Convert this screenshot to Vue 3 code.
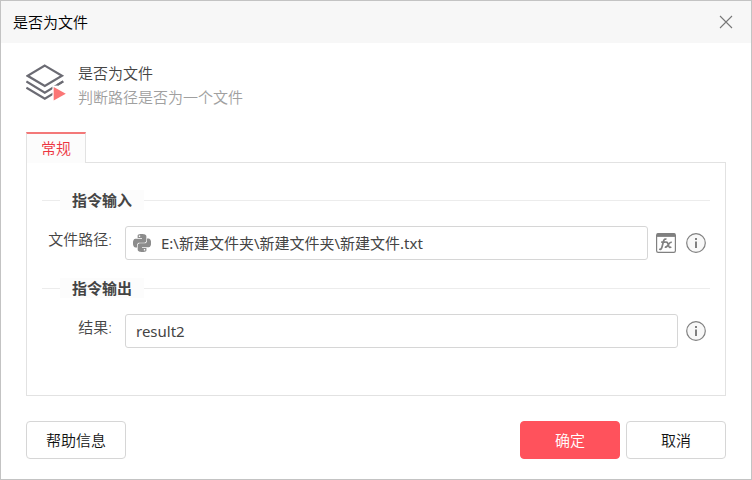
<template>
  <form class="dialog" @submit.prevent>
    <header class="title-bar">
      <h1 class="title">是否为文件</h1>
      <button class="close" type="button" aria-label="关闭">
        <svg width="14" height="14" viewBox="0 0 14 14">
          <path d="M1 1 13 13M13 1 1 13" stroke="#777" stroke-width="1.1" fill="none" />
        </svg>
      </button>
    </header>

    <main class="body">
      <section class="intro">
        <svg class="intro-icon" width="40" height="44" viewBox="0 0 40 44">
          <g fill="none" stroke="#6b6b73" stroke-width="2.2">
            <path d="M18.8 2.6 36 12.8 18.8 23 1.6 12.8Z" />
            <path d="M.4 18.4 18.8 29.6 37.2 18.4" />
            <path d="M.4 24.6 18.8 35.8 37.2 24.6" />
          </g>
          <path d="M26.4 22.6H40V40H26.4Z" fill="#fff" />
          <path d="M31.5 21.9 37.2 18.4" fill="none" stroke="#6b6b73" stroke-width="2.2" />
          <path d="M27.7 24 39.8 30.8 27.7 37.6Z" fill="#fb7676" />
        </svg>
        <div>
          <div class="intro-name">是否为文件</div>
          <div class="intro-desc">判断路径是否为一个文件</div>
        </div>
      </section>

      <div class="tabs" role="tablist">
        <button class="tab" type="button" role="tab" aria-selected="true">常规</button>
      </div>

      <div class="panel" role="tabpanel">
        <section v-for="group in groups" :key="group.key" class="group">
          <div class="legend"><span class="legend-text">{{ group.title }}</span></div>
          <div class="field">
            <label class="label" :for="group.key">{{ group.label }}:</label>
            <div class="box">
              <svg v-if="group.script" class="python" width="18" height="18" viewBox="0 0 24 24" fill="#8c8c8c">
                <path d="M14.25.18l.9.2.73.26.59.3.45.32.34.34.25.34.16.33.1.3.04.26.02.2-.01.13V8.5l-.05.63-.13.55-.21.46-.26.38-.3.31-.33.25-.35.19-.35.14-.33.1-.3.07-.26.04-.21.02H8.77l-.69.05-.59.14-.5.22-.41.27-.33.32-.27.35-.2.36-.15.37-.1.35-.07.32-.04.27-.02.21v3.06H3.17l-.21-.03-.28-.07-.32-.12-.35-.18-.36-.26-.36-.36-.35-.46-.32-.59-.28-.73-.21-.88-.14-1.05-.05-1.23.06-1.22.16-1.04.24-.87.32-.71.36-.57.4-.44.42-.33.42-.24.4-.16.36-.1.32-.05.24-.01h.16l.06.01h8.16v-.83H6.18l-.01-2.75-.02-.37.05-.34.11-.31.17-.28.25-.26.31-.23.38-.2.44-.18.51-.15.58-.12.64-.1.71-.06.77-.04.84-.02 1.27.05zm-6.3 1.98l-.23.33-.08.41.08.41.23.34.33.22.41.09.41-.09.33-.22.23-.34.08-.41-.08-.41-.23-.33-.33-.22-.41-.09-.41.09z" />
                <path d="M21.1 6.11l.28.06.32.12.35.18.36.27.36.35.35.47.32.59.28.73.21.88.14 1.04.05 1.23-.06 1.23-.16 1.04-.24.86-.32.71-.36.57-.4.45-.42.33-.42.24-.4.16-.36.09-.32.05-.24.02-.16-.01h-8.22v.82h5.84l.01 2.76.02.36-.05.34-.11.31-.17.29-.25.25-.31.24-.38.2-.44.17-.51.15-.58.13-.64.09-.71.07-.77.04-.84.01-1.27-.04-1.07-.14-.9-.2-.73-.25-.59-.3-.45-.33-.34-.34-.25-.34-.16-.33-.1-.3-.04-.25-.02-.2.01-.13v-5.34l.05-.64.13-.54.21-.46.26-.38.3-.32.33-.24.35-.2.35-.14.33-.1.3-.06.26-.04.21-.02.13-.01h5.84l.69-.05.59-.14.5-.21.41-.28.33-.32.27-.35.2-.36.15-.36.1-.35.07-.32.04-.28.02-.21V6.07h2.09l.14.01zm-6.47 14.25l-.23.33-.08.41.08.41.23.33.33.23.41.08.41-.08.33-.23.23-.33.08-.41-.08-.41-.23-.33-.33-.23-.41-.08-.41.08z" />
              </svg>
              <input :id="group.key" v-model="group.value" class="input" type="text" />
            </div>
            <div class="tools">
              <button v-if="group.script" class="tool" type="button" aria-label="表达式">
                <svg width="20" height="20" viewBox="0 0 20 20" fill="none" stroke="#808080">
                  <rect x=".6" y=".6" width="18.8" height="18.8" rx="1.6" stroke-width="1.2" />
                  <path d="M1 2.2H19" stroke-width="3.4" />
                  <path d="M3.2 16c1.5.8 2.3-.2 2.8-2l1.6-6c.4-1.6 1.4-2.4 2.9-1.7M5.2 9.2h4.6" stroke-width="1.7" />
                  <path d="M9.6 9.5c1.2-.7 1.8-.2 2.2 1l1 2.8c.4 1.2 1.2 1.5 2.5.6M15.8 9.4c-1.1-.5-1.8.1-2.6 1.2l-2 2.5c-.7.9-1.3 1.2-2.4.8" stroke-width="1.7" />
                </svg>
              </button>
              <button class="tool" type="button" aria-label="说明">
                <svg width="20" height="20" viewBox="0 0 20 20">
                  <circle cx="10" cy="10" r="9.3" fill="#f8f8f8" stroke="#808080" stroke-width="1.2" />
                  <path d="M9 5H11V7H9ZM9 8.5H11V15H9Z" fill="#808080" />
                </svg>
              </button>
            </div>
          </div>
        </section>
      </div>

      <footer class="footer">
        <button class="btn" type="button">帮助信息</button>
        <div class="actions">
          <button class="btn btn-primary" type="submit">确定</button>
          <button class="btn" type="button">取消</button>
        </div>
      </footer>
    </main>
  </form>
</template>

<script setup>
import { reactive } from 'vue'

const groups = reactive([
  {
    key: 'path',
    title: '指令输入',
    label: '文件路径',
    value: 'E:\\新建文件夹\\新建文件夹\\新建文件.txt',
    script: true
  },
  { key: 'result', title: '指令输出', label: '结果', value: 'result2', script: false }
])
</script>

<style>
body {
  margin: 0;
  background: #fff;
}
</style>

<style scoped>
.dialog {
  box-sizing: border-box;
  min-height: 100vh;
  border: 1px solid #c3c3c3;
  background: #fff;
  color: #444;
  font-family: "Noto Sans", "Noto Sans CJK SC", sans-serif;
  font-size: 15px;
  font-weight: 350;
  line-height: 24px;
}
button,
input {
  font: inherit;
  color: inherit;
}
button {
  padding: 0;
  border: none;
  background: none;
  cursor: pointer;
}
svg {
  display: block;
  flex-shrink: 0;
}
.title-bar {
  display: flex;
  align-items: center;
  justify-content: space-between;
  height: 42px;
  padding: 0 18px 0 12px;
  background: #f7f7f7;
}
.title {
  margin: 0;
  color: #000;
  font-size: 15px;
  font-weight: inherit;
}
.body { padding: 18px 25px 20px; }
.intro {
  display: flex;
  align-items: center;
  gap: 12px;
}
.intro-desc { color: #a0a0a0; }
.tabs {
  display: flex;
  margin-top: 23px;
}
.tab {
  box-sizing: border-box;
  width: 60px;
  height: 30px;
  border: 1px solid #e2e2e2;
  border-top: 2px solid #f37878;
  border-bottom: none;
  background: #fcfcfc;
  color: #ed3440;
}
.panel {
  position: relative;
  padding: 27px 15px 47px;
  border: 1px solid #e2e2e2;
}
/* opens the panel border under the active tab */
.panel::before {
  content: "";
  position: absolute;
  top: -1px;
  left: 0;
  width: 58px;
  height: 1px;
  background: #fcfcfc;
}
.group + .group { margin-top: 18px; }
.legend {
  display: flex;
  align-items: center;
}
.legend::before,
.legend::after {
  content: "";
  width: 18px;
  height: 1px;
  background: #ececec;
}
.legend::after {
  flex: 1;
}
.legend-text {
  padding: 0 12px;
  background: #fcfcfc;
  font-weight: 700;
  line-height: 20px;
}
.field {
  display: flex;
  align-items: center;
  margin-top: 16px;
}
.label {
  width: 70px;
  height: 32px;
  margin-right: 13px;
  text-align: right;
}
.box {
  box-sizing: border-box;
  display: flex;
  flex: 1;
  align-items: center;
  height: 34px;
  padding: 0 10px;
  border: 1px solid #d6d6d6;
  border-radius: 3px;
}
.python { margin: 0 10px 0 -3px; }
.input {
  flex: 1;
  min-width: 0;
  padding: 0;
  border: none;
  outline: none;
  background: none;
  font-weight: 400;
}
.tools {
  display: flex;
  gap: 10px;
  padding: 0 4px 0 8px;
}
.footer {
  display: flex;
  justify-content: space-between;
  margin-top: 25px;
}
.actions {
  display: flex;
  gap: 6px;
}
.btn {
  box-sizing: border-box;
  width: 100px;
  height: 38px;
  border: 1px solid #d6d6d6;
  border-radius: 4px;
  color: #111;
}
.btn-primary {
  border-color: #ff525c;
  background: #ff525c;
  color: #fff;
}
</style>
